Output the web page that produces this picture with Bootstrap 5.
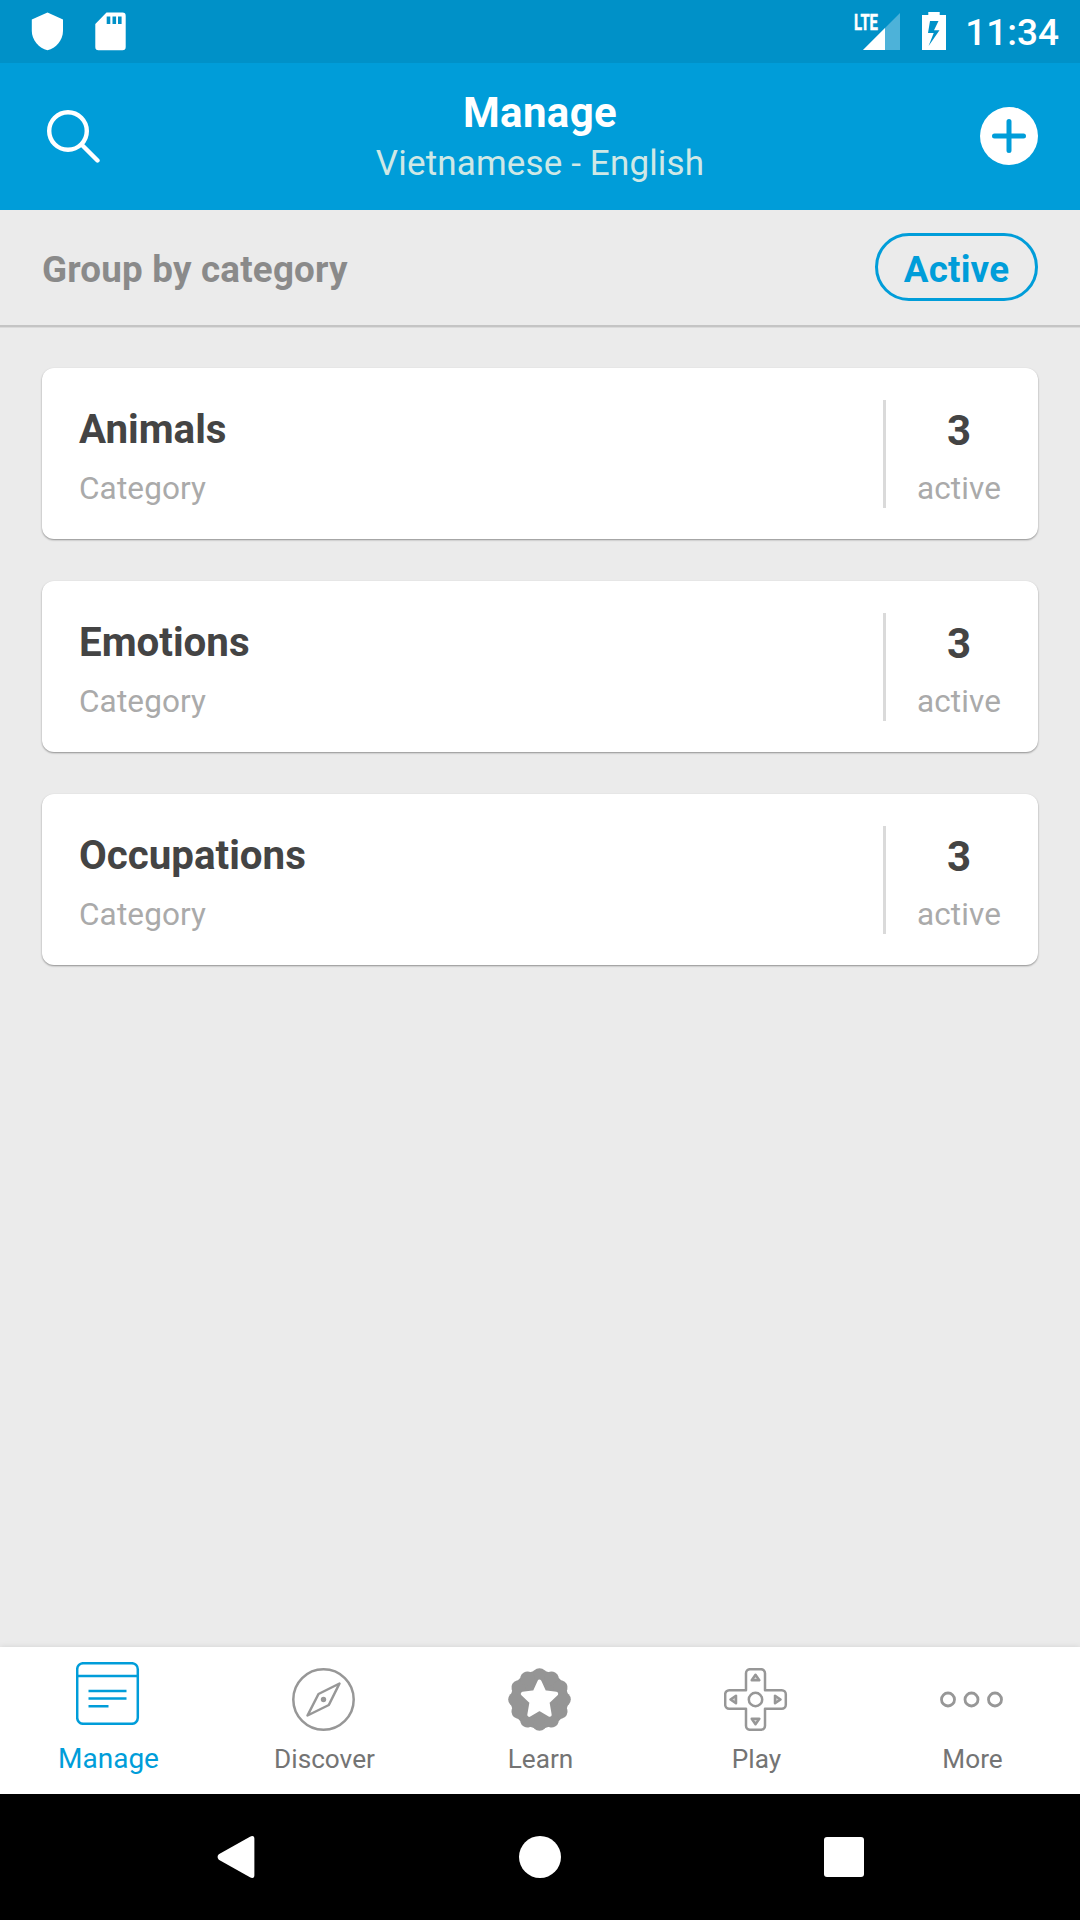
<!DOCTYPE html>
<html lang="en">
<head>
<meta charset="utf-8">
<meta name="viewport" content="width=device-width, initial-scale=1">
<title>Manage</title>
<link href="https://cdn.jsdelivr.net/npm/bootstrap@5.3.0/dist/css/bootstrap.min.css" rel="stylesheet">
<style>
  body { font-family: Roboto, "Noto Sans", sans-serif; background: #ebebeb; width: 1080px; height: 1920px; overflow: hidden; }
  svg { display: block; flex: none; }
  .status-strip { height: 63px; background: #0091c8; padding: 0 21px 0 31px; }
  .clock { font-size: 37px; line-height: 44px; font-weight: 500; padding-top: 3px; margin-left: 19px; }
  .battery { margin-left: 21px; }
  .sd-card { margin-left: 31px; }
  .app-bar { height: 147px; background: #009dd9; padding: 0 42px; }
  .app-title { font-size: 42px; letter-spacing: .35px; line-height: 50px; margin-top: 25px; }
  .app-sub { font-size: 35px; line-height: 48px; margin-top: 2px; color: #cfe8e6; letter-spacing: .15px; }
  .filter-bar { height: 117px; padding: 0 42px; border-bottom: 2px solid #c4c4c4; box-shadow: 0 1px 0 #dadada; color: #8a8a8a; font-size: 36.75px; letter-spacing: .2px; flex: none; }
  .filter-bar > span { padding-top: 4px; }
  .pill-btn, .pill-btn:hover { width: 163px; height: 68px; border: 3px solid #009dd9; color: #009dd9; font-size: 36.75px; letter-spacing: .2px; line-height: 40px; padding: 5px 0 0; margin-bottom: 1px; }
  .list-area { padding: 41px 42px 0; gap: 42px; }
  .cat-card { height: 171px; border: 0; border-radius: 12px; box-shadow: 0 1px 2px rgba(0,0,0,.4); padding-left: 37px; }
  .cat-name { font-size: 40.3px; line-height: 48px; color: #444; margin-top: 38px; }
  .cat-note { font-size: 31.5px; line-height: 40px; color: #aaa; margin-top: 15px; letter-spacing: .12px; }
  .cat-rule { width: 3px; height: 108px; background: #dadada; margin-top: 32px; }
  .cat-side { width: 152px; padding-right: 6px; }
  .cat-side .cat-name { font-size: 42px; margin-top: 39px; }
  .cat-side .cat-note { margin-top: 14px; }
  .tab-strip { height: 147px; box-shadow: 0 0 6px rgba(0,0,0,.1); flex: none; }
  .tab-item { width: 216px; padding-top: 21px; font-size: 26.2px; line-height: 34px; color: #747474; }
  .tab-item svg { margin-bottom: 11px; }
  .tab-item span { padding-left: 1px; }
  .tab-item.current { color: #009dd9; font-size: 28px; padding-top: 15px; }
  .tab-item.current svg { margin-bottom: 17px; }
  .sys-nav { height: 126px; padding-left: 217px; flex: none; }
</style>
<script src="https://cdn.jsdelivr.net/npm/bootstrap@5.3.0/dist/js/bootstrap.bundle.min.js"></script>
</head>
<body class="d-flex flex-column">

<div class="status-strip d-flex align-items-center text-white">
  <svg width="33" height="63" viewBox="31 0 33 63" fill="#fff"><path d="M47.500 12.500 63 19.500V31C63 40 56 48.500 47.500 50.300 39 48.500 31.800 40 31.800 31V19.500Z"/></svg>
  <svg class="sd-card" width="31" height="63" viewBox="95 0 31 63"><path fill="#fff" d="M106.500 12.500H122.500a3.200 3.200 0 0 1 3.200 3.200V47a3.200 3.200 0 0 1-3.200 3.200H98.500a3.200 3.200 0 0 1-3.200-3.200V24Z"/><path fill="#0091c8" d="M106.700 16.500h3.600V24h-3.600zM112.500 16.500h3.600V24h-3.600zM118 16.500h3.600V24H118z"/></svg>
  <svg class="ms-auto" width="48" height="63" viewBox="853 0 48 63">
    <path d="M900 13V50H863Z" fill="#4db2d9"/><path d="M885 28V50H863Z" fill="#fff"/>
    <text x="854" y="29.800" font-size="22.500" font-weight="700" fill="#fff" stroke="#fff" stroke-width=".5" textLength="24" lengthAdjust="spacingAndGlyphs">LTE</text>
  </svg>
  <svg class="battery" width="24" height="63" viewBox="922 0 24 63"><path fill="#fff" fill-rule="evenodd" d="M928.300 12h11.400v3h6.300v35h-24V15h6.300ZM930 21 928 33H933.700L928.600 46 939.500 30.300H934L938.500 21Z"/></svg>
  <span class="clock">11:34</span>
</div>

<header class="app-bar d-flex justify-content-between text-white">
  <svg width="58" height="147" viewBox="42 63 58 147" fill="none" stroke="#fff" stroke-width="4.400" stroke-linecap="round"><circle cx="68" cy="131" r="18.800"/><path d="M82.500 145.500 97.500 160.500"/></svg>
  <div class="text-center">
    <div class="app-title fw-bold">Manage</div>
    <div class="app-sub">Vietnamese - English</div>
  </div>
  <svg width="58" height="147" viewBox="980 63 58 147"><circle cx="1009" cy="136" r="29" fill="#fff"/><path d="M994.500 136h29M1009 121.500v29" stroke="#009dd9" stroke-width="5" stroke-linecap="round"/></svg>
</header>

<div class="filter-bar d-flex align-items-center justify-content-between fw-bold">
  <span>Group by category</span>
  <button class="btn pill-btn rounded-pill fw-bold">Active</button>
</div>

<main class="list-area d-flex flex-column flex-grow-1">
  <div class="card cat-card flex-row">
    <div class="flex-grow-1"><div class="cat-name fw-bold">Animals</div><div class="cat-note">Category</div></div>
    <div class="cat-rule"></div>
    <div class="cat-side text-center"><div class="cat-name fw-bold">3</div><div class="cat-note">active</div></div>
  </div>
  <div class="card cat-card flex-row">
    <div class="flex-grow-1"><div class="cat-name fw-bold">Emotions</div><div class="cat-note">Category</div></div>
    <div class="cat-rule"></div>
    <div class="cat-side text-center"><div class="cat-name fw-bold">3</div><div class="cat-note">active</div></div>
  </div>
  <div class="card cat-card flex-row">
    <div class="flex-grow-1"><div class="cat-name fw-bold">Occupations</div><div class="cat-note">Category</div></div>
    <div class="cat-rule"></div>
    <div class="cat-side text-center"><div class="cat-name fw-bold">3</div><div class="cat-note">active</div></div>
  </div>
</main>

<nav class="tab-strip d-flex bg-white">
  <div class="tab-item current d-flex flex-column align-items-center">
    <svg width="64" height="63" viewBox="0 0 64 63" fill="none" stroke="#009dd9" stroke-width="2.500"><rect x="1.200" y="1.200" width="60.600" height="60.600" rx="6"/><path d="M1 14H62M12.500 29H50.500M12.500 36.500H50.500M12.500 44.300H32.500"/></svg>
    <span>Manage</span>
  </div>
  <div class="tab-item d-flex flex-column align-items-center">
    <svg width="64" height="63" viewBox="0 0 64 63" fill="none" stroke="#979797" stroke-width="2.500" stroke-linejoin="round"><circle cx="31.500" cy="31.500" r="30.200"/><path d="M47.500 15.500 26.500 26 15.500 47.500 36.800 37Z"/><circle cx="31.500" cy="31.500" r="2.700" fill="#979797" stroke="none"/></svg>
    <span>Discover</span>
  </div>
  <div class="tab-item d-flex flex-column align-items-center">
    <svg width="64" height="63" viewBox="-31.500 -31.500 64 63" fill="#959595">
      <defs><g id="lobes"><circle cy="-24" r="7.300"/><circle cy="24" r="7.300"/><circle cx="-24" r="7.300"/><circle cx="24" r="7.300"/></g></defs>
      <circle r="28.900"/><use href="#lobes"/><use href="#lobes" transform="rotate(30)"/><use href="#lobes" transform="rotate(60)"/>
      <path fill="#fff" stroke="#fff" stroke-width="4" stroke-linejoin="round" d="M0-18 4.900-7.200 16.700-5.700 8 2.600 10.200 15.300 0 9.300-10.200 15.300-8 2.600-16.700-5.700-4.900-7.200Z"/>
    </svg>
    <span>Learn</span>
  </div>
  <div class="tab-item d-flex flex-column align-items-center">
    <svg width="64" height="63" viewBox="0 0 64 63" fill="none" stroke="#979797" stroke-width="2.500" stroke-linejoin="round"><path d="M26 1.200H37a4 4 0 0 1 4 4V22.300H57.800a4 4 0 0 1 4 4V36.700a4 4 0 0 1-4 4H41V57.800a4 4 0 0 1-4 4H26a4 4 0 0 1-4-4V40.700H5.200a4 4 0 0 1-4-4V26.300a4 4 0 0 1 4-4H22V5.200a4 4 0 0 1 4-4Z"/><circle cx="31.500" cy="31.500" r="6.700"/><path fill="#d5d5d5" d="M31.500 6.800 35.300 12.200H27.700ZM31.500 56.200 35.300 50.800H27.700ZM6.500 31.500 12 27.700V35.300ZM56.500 31.500 51 27.700V35.300Z"/></svg>
    <span>Play</span>
  </div>
  <div class="tab-item d-flex flex-column align-items-center">
    <svg width="64" height="63" viewBox="0 0 64 63" fill="none" stroke="#979797" stroke-width="2.800"><circle cx="8" cy="31.500" r="6.500"/><circle cx="31.500" cy="31.500" r="6.500"/><circle cx="55" cy="31.500" r="6.500"/></svg>
    <span>More</span>
  </div>
</nav>

<div class="sys-nav bg-black d-flex">
  <svg width="650" height="126" viewBox="217 1794 650 126" fill="#fff"><path d="M218.800 1854.300 249.500 1837Q254.400 1834.500 254.400 1839V1875Q254.400 1879.500 249.500 1877L218.800 1859.700Q216.300 1857 218.800 1854.300Z"/><circle cx="540" cy="1857" r="21"/><rect x="824" y="1837" width="40" height="40" rx="3"/></svg>
</div>
</body>
</html>
